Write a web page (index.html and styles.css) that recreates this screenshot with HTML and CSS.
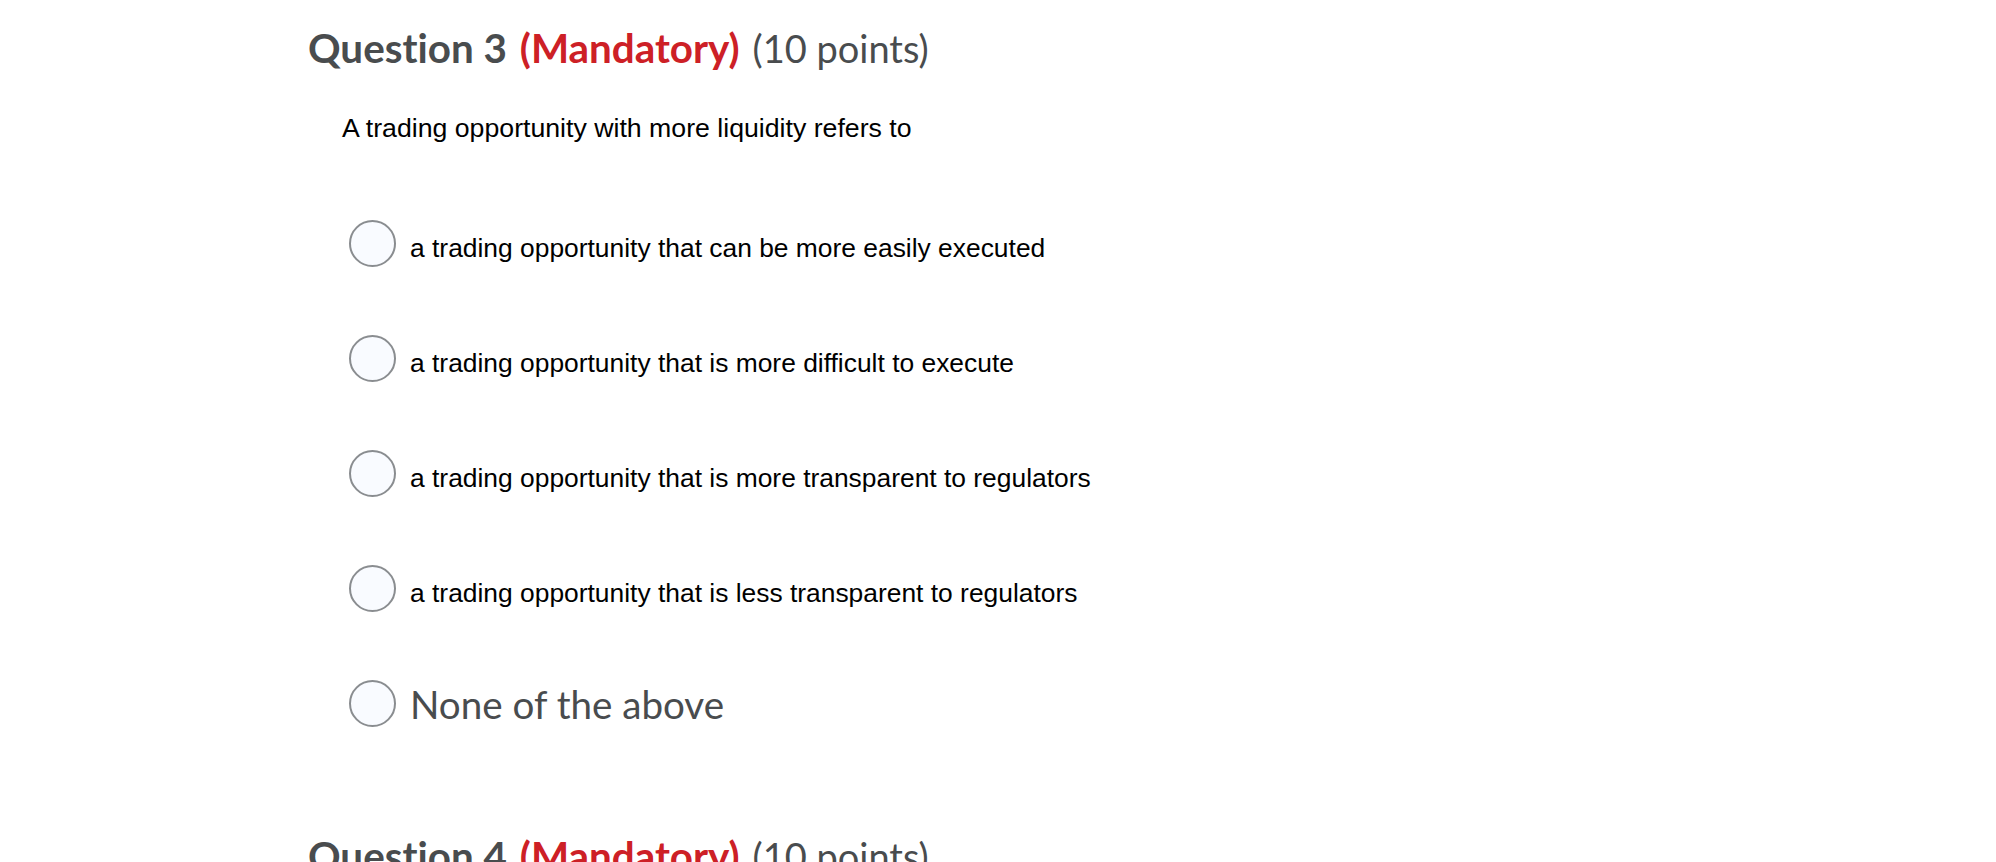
FILE: index.html
```html
<!DOCTYPE html>
<html lang="en">
<head>
<meta charset="utf-8">
<title>Question 3</title>
<link rel="stylesheet" href="styles.css">
</head>
<body>
<main class="quiz">
  <section class="question">
    <h2 class="q-title"><span class="q-num">Question 3</span> <span class="q-mand">(Mandatory)</span> <span class="q-pts">(10 points)</span></h2>
    <p class="q-text">A trading opportunity with more liquidity refers to</p>
    <ul class="options">
      <li class="option"><span class="radio"></span><span class="opt-label">a trading opportunity that can be more easily executed</span></li>
      <li class="option"><span class="radio"></span><span class="opt-label">a trading opportunity that is more difficult to execute</span></li>
      <li class="option"><span class="radio"></span><span class="opt-label">a trading opportunity that is more transparent to regulators</span></li>
      <li class="option"><span class="radio"></span><span class="opt-label">a trading opportunity that is less transparent to regulators</span></li>
      <li class="option"><span class="radio"></span><span class="opt-label opt-lato">None of the above</span></li>
    </ul>
  </section>
  <section class="question">
    <h2 class="q-title"><span class="q-num">Question 4</span> <span class="q-mand">(Mandatory)</span> <span class="q-pts">(10 points)</span></h2>
  </section>
</main>
</body>
</html>
```
FILE: styles.css
```css
html, body {
  margin: 0;
  padding: 0;
  background: #ffffff;
}
body {
  width: 1996px;
  height: 862px;
  overflow: hidden;
}
.quiz {
  padding: 24px 0 0 308px;
  display: flex;
  flex-direction: column;
}
.question {
  display: flex;
  flex-direction: column;
}
.q-title {
  margin: 0;
  font-family: Lato, "Open Sans", sans-serif;
  font-size: 40.4px;
  line-height: 48px;
  color: #494c4e;
  font-weight: 700;
  white-space: nowrap;
  font-variant-ligatures: none;
  font-feature-settings: "liga" 0;
}
.q-mand {
  color: #cd2026;
  margin-left: 3px;
}
.q-pts {
  font-weight: 400;
  font-size: 38px;
  margin-left: 3px;
}
.q-text {
  margin: 40px 0 0 34px;
  font-family: "Liberation Sans", Arial, sans-serif;
  font-size: 26.7px;
  line-height: 32px;
  color: #000000;
}
.options {
  list-style: none;
  margin: 76px 0 0 41px;
  padding: 0;
  display: flex;
  flex-direction: column;
  gap: 68px;
}
.option {
  display: flex;
  align-items: center;
  height: 47px;
}
.radio {
  box-sizing: border-box;
  width: 47px;
  height: 47px;
  border-radius: 50%;
  border: 2px solid #8a8d90;
  background: #f9fbff;
  flex: none;
}
.opt-label {
  margin-left: 14px;
  padding-top: 8px;
  font-family: "Liberation Sans", Arial, sans-serif;
  font-size: 26.4px;
  line-height: 32px;
  color: #000000;
  white-space: nowrap;
}
.opt-label.opt-lato {
  font-family: Lato, "Open Sans", sans-serif;
  font-size: 38.6px;
  line-height: 46px;
  padding-top: 0;
  color: #494c4e;
  font-variant-ligatures: none;
}
.question + .question {
  margin-top: 105px;
}
```
